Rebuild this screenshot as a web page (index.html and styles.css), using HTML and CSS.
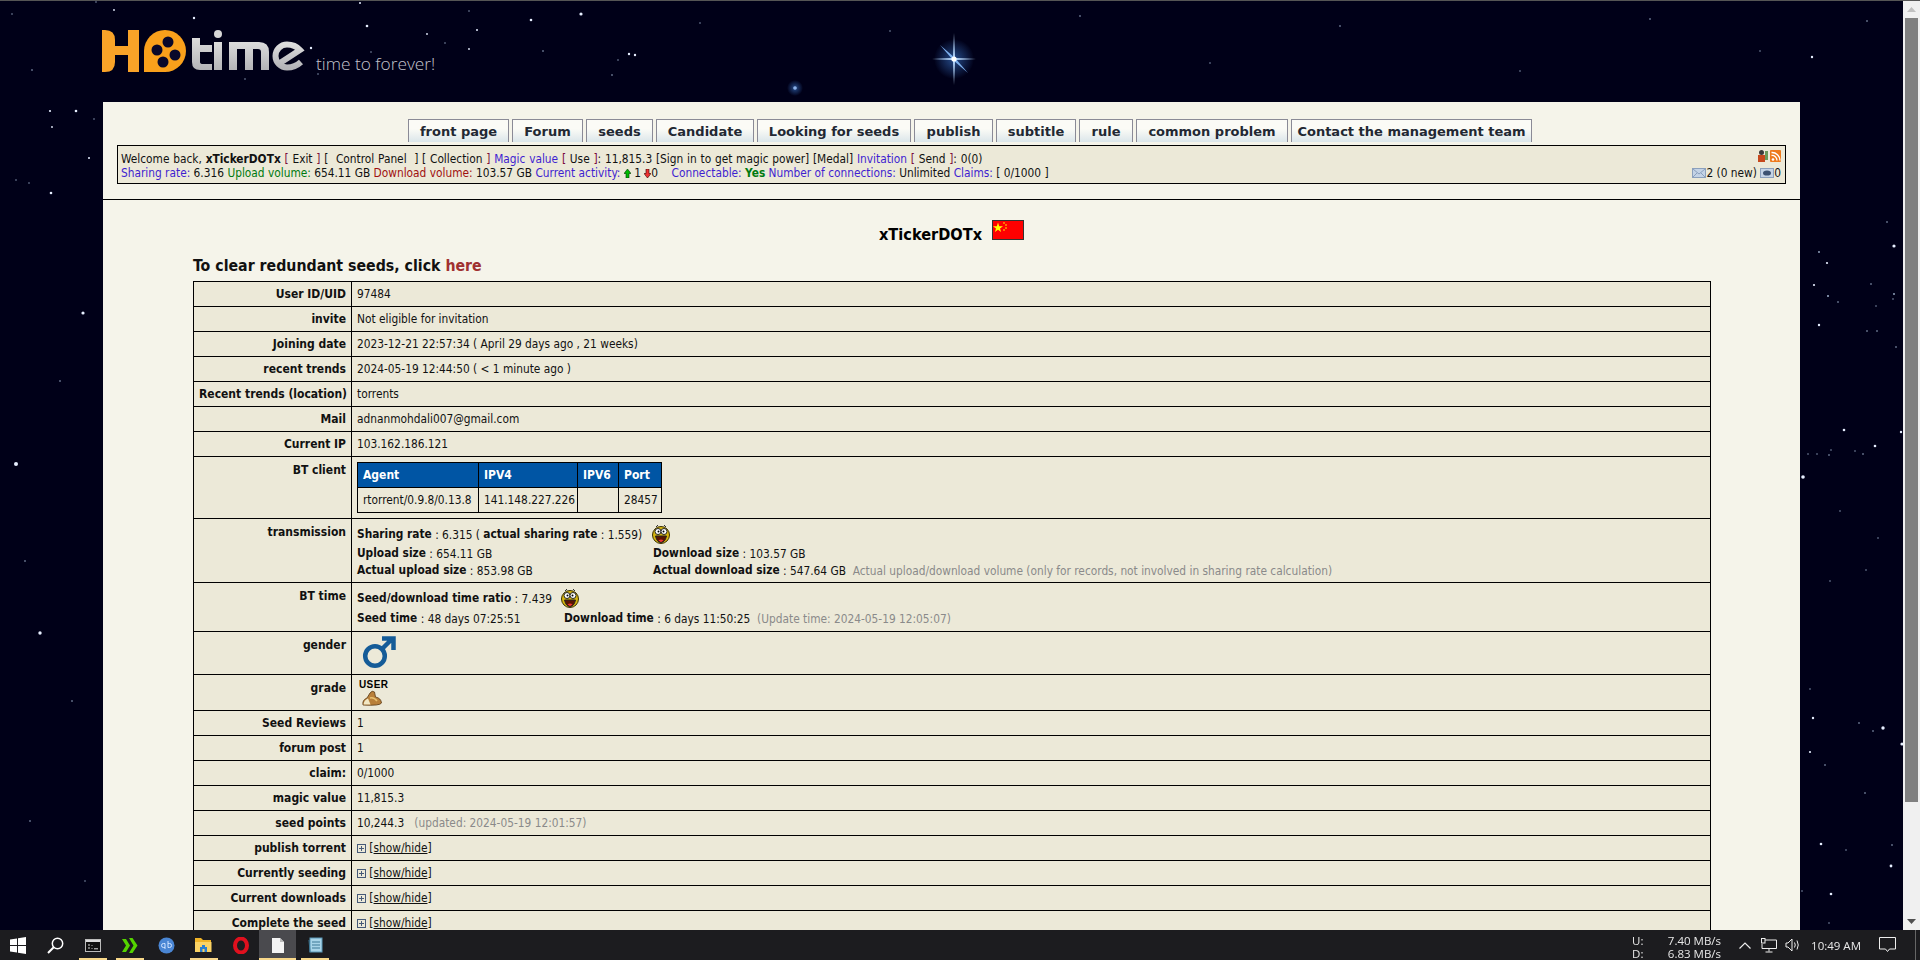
FILE: index.html
```html
<!DOCTYPE html>
<html lang="en">
<head>
<meta charset="utf-8">
<title>HDtime</title>
<link rel="stylesheet" href="styles.css">
</head>
<body>
<svg class="sky" width="1920" height="960" viewBox="0 0 1920 960" aria-hidden="true">
  <defs>
    <radialGradient id="glow"><stop offset="0" stop-color="#3f7fd8" stop-opacity=".6"/><stop offset="1" stop-color="#3f7fd8" stop-opacity="0"/></radialGradient>
  </defs>
  <g fill="#e6eeff">
    <circle cx="194" cy="17" r="1.2"/><circle cx="114" cy="9" r=".9"/><circle cx="581" cy="13" r="1.6"/><circle cx="531" cy="19" r="1.3"/><circle cx="367" cy="25" r="1.3"/><circle cx="427" cy="33" r=".9"/><circle cx="477" cy="29" r="1"/><circle cx="469" cy="48" r=".9"/><circle cx="629" cy="53" r="1.2"/><circle cx="635" cy="54" r="1.2"/><circle cx="311" cy="47" r="1.2"/><circle cx="795" cy="87" r="1.8"/><circle cx="360" cy="2" r="1"/><circle cx="1812" cy="56" r="1.2"/>
    <circle cx="50" cy="110" r="1.1"/><circle cx="76" cy="110" r="1.3"/><circle cx="52" cy="126" r=".9"/><circle cx="89" cy="157" r="1"/><circle cx="51" cy="192" r="1.3"/><circle cx="16" cy="463" r="2"/><circle cx="83" cy="312" r="1.6"/><circle cx="40" cy="632" r="1.7"/>
    <circle cx="1894" cy="245" r="1.6"/><circle cx="1827" cy="262" r="1.1"/><circle cx="1814" cy="284" r="1.1"/><circle cx="1819" cy="324" r="1.2"/><circle cx="1844" cy="429" r="1.3"/><circle cx="1901" cy="431" r="1.2"/><circle cx="1875" cy="445" r="1.3"/><circle cx="1803" cy="476" r="1.8"/><circle cx="1813" cy="717" r="1.2"/><circle cx="1883" cy="727" r="1.7"/><circle cx="1902" cy="743" r="1.6"/><circle cx="1810" cy="751" r="1.1"/><circle cx="1821" cy="843" r="1.3"/><circle cx="1891" cy="865" r="1.4"/><circle cx="1831" cy="893" r="1.3"/>
  </g>
  <g fill="#9fb2cc">
    <circle cx="12" cy="13" r=".7"/><circle cx="96" cy="1" r=".7"/><circle cx="32" cy="69" r=".8"/><circle cx="469" cy="10" r=".7"/><circle cx="543" cy="50" r=".8"/><circle cx="445" cy="42" r=".7"/><circle cx="371" cy="51" r=".7"/><circle cx="612" cy="74" r=".8"/><circle cx="618" cy="59" r=".7"/><circle cx="245" cy="78" r=".7"/><circle cx="318" cy="73" r=".7"/><circle cx="700" cy="22" r=".7"/><circle cx="890" cy="30" r=".7"/><circle cx="1080" cy="15" r=".8"/><circle cx="1210" cy="62" r=".7"/><circle cx="1340" cy="25" r=".8"/><circle cx="1520" cy="70" r=".7"/><circle cx="1650" cy="18" r=".8"/><circle cx="1760" cy="50" r=".7"/><circle cx="1867" cy="20" r=".8"/>
    <circle cx="94" cy="118" r=".7"/><circle cx="16" cy="179" r=".7"/><circle cx="29" cy="182" r=".7"/><circle cx="60" cy="380" r=".8"/><circle cx="25" cy="560" r=".8"/><circle cx="72" cy="700" r=".8"/><circle cx="30" cy="820" r=".8"/><circle cx="85" cy="880" r=".7"/>
    <circle cx="1887" cy="221" r=".8"/><circle cx="1819" cy="251" r=".9"/><circle cx="1828" cy="295" r="1"/><circle cx="1838" cy="301" r=".8"/><circle cx="1871" cy="283" r=".8"/><circle cx="1894" cy="293" r=".9"/><circle cx="1893" cy="298" r=".7"/><circle cx="1876" cy="305" r=".7"/><circle cx="1867" cy="330" r=".8"/><circle cx="1877" cy="330" r=".8"/><circle cx="1896" cy="346" r=".8"/><circle cx="1863" cy="453" r=".8"/><circle cx="1855" cy="450" r=".7"/><circle cx="1829" cy="454" r=".8"/><circle cx="1831" cy="449" r=".7"/><circle cx="1817" cy="453" r=".7"/><circle cx="1808" cy="453" r=".7"/><circle cx="1840" cy="510" r=".7"/><circle cx="1878" cy="537" r=".7"/><circle cx="1866" cy="569" r=".7"/><circle cx="1830" cy="580" r=".7"/><circle cx="1810" cy="688" r=".7"/><circle cx="1859" cy="722" r=".8"/><circle cx="1873" cy="730" r=".8"/><circle cx="1825" cy="764" r=".8"/><circle cx="1865" cy="792" r=".8"/><circle cx="1892" cy="844" r=".8"/><circle cx="1846" cy="849" r=".7"/><circle cx="1802" cy="890" r=".7"/><circle cx="1829" cy="922" r=".7"/>
  </g>
  <circle cx="954" cy="58" r="20" fill="url(#glow)"/>
  <path d="M954 32 L955 57 L976 58 L955 59 L954 84 L953 59 L932 58 L953 57Z" fill="#bcdcff"/>
  <path d="M940 44 L955 57 L968 72 L953 59Z" fill="#7fb2f0"/>
  <circle cx="954" cy="58" r="2.6" fill="#fff"/>
  <circle cx="795" cy="87" r="8" fill="url(#glow)"/>
</svg>

<div class="page">
  <header class="masthead">
    <svg class="logo" width="340" height="50" viewBox="0 0 340 50" aria-label="HDtime logo">
      <defs>
        <linearGradient id="silver" x1="0" x2="0" y1="0" y2="1"><stop offset="0" stop-color="#dcdcdc"/><stop offset="1" stop-color="#b4b4b8"/></linearGradient>
      </defs>
      <path d="M0 0H3Q13 0 13 10V16H26V0H37V42H26V25H13V32Q13 42 3 42H0Z" fill="#f9a328"/>
      <path d="M42 42V21A21 21 0 1 1 63 42Z" fill="#f9a01b"/>
      <g fill="#08082a"><circle cx="66" cy="12" r="5.500"/><circle cx="55" cy="20" r="5.500"/><circle cx="73" cy="25" r="5.500"/><circle cx="61" cy="32" r="5.500"/></g>
      <path d="M90 8H98V15H110V22H98V32Q98 34 101 34H110V40H98Q90 40 90 32Z" fill="url(#silver)"/>
      <circle cx="116" cy="4" r="4" fill="#d8d8d8"/>
      <rect x="112" y="12" width="8" height="28" fill="url(#silver)"/>
      <path d="M127 40V12H157Q167 12 167 22V40H159V22Q159 19 156 19H151V40H143V19H135V40Z" fill="url(#silver)"/>
      <path d="M178 33 198 20Q193 14.500 185 14.500A11.500 11.500 0 0 0 185 37.500Q193 37.500 199 32" fill="none" stroke="url(#silver)" stroke-width="6"/>
      <text class="tagline" x="214" y="40">time to forever!</text>
    </svg>
  </header>

  <main class="panel">
    <nav class="tabs">
      <a class="tab">front page</a><a class="tab">Forum</a><a class="tab">seeds</a><a class="tab">Candidate</a><a class="tab">Looking for seeds</a><a class="tab">publish</a><a class="tab">subtitle</a><a class="tab">rule</a><a class="tab">common problem</a><a class="tab">Contact the management team</a>
    </nav>
    <section class="info">
      <div class="info-left">
        <div class="info-first">Welcome back, <b>xTickerDOTx</b> <span class="br">[</span> Exit <span class="br">]</span> [ &nbsp;Control Panel &nbsp;] [ Collection <span class="br">]</span> <span class="blue">Magic value</span> <span class="br">[</span> Use <span class="br">]</span>: 11,815.3 [Sign in to get magic power] [Medal] <span class="blue">Invitation</span> <span class="br">[</span> Send <span class="br">]</span>: 0(0)</div>
        <div><span class="blue">Sharing rate:</span> 6.316 <span class="green">Upload volume:</span> 654.11 GB <span class="red">Download volume:</span> 103.57 GB <span class="blue">Current activity:</span> <svg class="arrow" width="7" height="9" viewBox="0 0 7 9"><path d="M3.500 0 7 4.500H5V9H2V4.500H0Z" fill="#0b0" stroke="#030" stroke-width=".6"/></svg> 1 <svg class="arrow" width="7" height="9" viewBox="0 0 7 9"><path d="M3.500 9 7 4.500H5V0H2V4.500H0Z" fill="#e33" stroke="#300" stroke-width=".6"/></svg>0 &nbsp;&nbsp; <span class="blue">Connectable:</span> <b class="yes">Yes</b> <span class="blue">Number of connections:</span> Unlimited <span class="blue">Claims:</span> [ 0/1000 ]</div>
      </div>
      <div class="info-right">
        <div class="info-icons">
          <svg width="11" height="12" viewBox="0 0 11 12"><circle cx="4.500" cy="2.500" r="2.500" fill="#3a3a3a"/><rect x="1" y="5" width="7" height="7" fill="#c6481c"/><rect x="8" y="1" width="3" height="9" fill="#6a9a5a"/></svg>
          <svg width="11" height="12" viewBox="0 0 11 12"><rect width="11" height="12" rx="1" fill="#ee7a1c"/><circle cx="3" cy="9.500" r="1.300" fill="#fff"/><path d="M1.500 5.500A5 5 0 0 1 7 10.500M1.500 2.500A8 8 0 0 1 10 10.500" fill="none" stroke="#fff" stroke-width="1.300"/></svg>
        </div>
        <div class="info-msgs">
          <svg width="14" height="10" viewBox="0 0 14 10"><rect x=".5" y=".5" width="13" height="9" fill="#c4d3e6" stroke="#8ba0bd"/><path d="M1 1 7 6l6-5M1 9l4-4M13 9 9 5" fill="none" stroke="#8ba0bd"/></svg>2 (0 new) <svg width="14" height="10" viewBox="0 0 14 10"><rect x=".5" y=".5" width="13" height="9" fill="#c4d3e6" stroke="#8ba0bd"/><ellipse cx="7" cy="5" rx="4" ry="2.600" fill="#3d5272"/></svg>0
        </div>
      </div>
    </section>
    <hr class="rule">
    <section class="profile">
      <h1 class="username">xTickerDOTx<svg class="flag" width="32" height="20" viewBox="0 0 32 20"><rect x=".5" y=".5" width="31" height="19" fill="#f00" stroke="#333"/><path d="M6 2.500 7.200 6.200 11 6.200 8 8.400 9.100 12 6 9.800 2.900 12 4 8.400 1 6.200 4.800 6.200Z" fill="#ff0"/><g fill="#ff0"><circle cx="12" cy="3" r=".8"/><circle cx="14" cy="5" r=".8"/><circle cx="14" cy="8" r=".8"/><circle cx="12" cy="10" r=".8"/></g></svg></h1>
      <h2 class="clear">To clear redundant seeds, click <a class="here">here</a></h2>
      <table class="details">
        <tr><th>User ID/UID</th><td>97484</td></tr>
        <tr><th>invite</th><td>Not eligible for invitation</td></tr>
        <tr><th>Joining date</th><td>2023-12-21 22:57:34 ( April 29 days ago , 21 weeks)</td></tr>
        <tr><th>recent trends</th><td>2024-05-19 12:44:50 ( &lt; 1 minute ago )</td></tr>
        <tr><th>Recent trends (location)</th><td>torrents</td></tr>
        <tr><th>Mail</th><td>adnanmohdali007@gmail.com</td></tr>
        <tr><th>Current IP</th><td>103.162.186.121</td></tr>
        <tr class="top r-client"><th>BT client</th><td class="client-cell">
          <table class="client">
            <tr><th>Agent</th><th>IPV4</th><th>IPV6</th><th>Port</th></tr>
            <tr><td>rtorrent/0.9.8/0.13.8</td><td>141.148.227.226</td><td></td><td>28457</td></tr>
          </table>
        </td></tr>
        <tr class="top r-trans"><th>transmission</th><td class="stats">
          <div class="stat-line"><b>Sharing rate</b> : 6.315 ( <b>actual sharing rate</b> : 1.559) <svg class="smile" width="20" height="20" viewBox="0 0 20 20"><use href="#face"/></svg></div>
          <div class="stat-grid wide">
            <span><b>Upload size</b> : 654.11 GB</span><span><b>Download size</b> : 103.57 GB</span>
            <span><b>Actual upload size</b> : 853.98 GB</span><span><b>Actual download size</b> : 547.64 GB <i class="note">&nbsp;Actual upload/download volume (only for records, not involved in sharing rate calculation)</i></span>
          </div>
        </td></tr>
        <tr class="top r-time"><th>BT time</th><td class="stats">
          <div class="stat-line"><b>Seed/download time ratio</b> : 7.439 <svg class="smile" width="20" height="20" viewBox="0 0 20 20"><use href="#face"/></svg></div>
          <div class="stat-grid narrow">
            <span><b>Seed time</b> : 48 days 07:25:51</span><span><b>Download time</b> : 6 days 11:50:25 <i class="note">&nbsp;(Update time: 2024-05-19 12:05:07)</i></span>
          </div>
        </td></tr>
        <tr class="top r-gender"><th>gender</th><td class="gender-cell">
          <svg width="34" height="34" viewBox="0 0 34 34"><circle cx="13" cy="21" r="9.800" fill="none" stroke="#155c98" stroke-width="4.500"/><path d="M20 14 30 4M20 3.500H31.500V15" fill="none" stroke="#155c98" stroke-width="4.500"/></svg>
        </td></tr>
        <tr class="top r-grade"><th>grade</th><td class="grade-cell">
          <span class="user-badge">USER</span>
          <svg class="bag" width="20" height="16" viewBox="0 0 20 16"><path d="M1 15Q0 10 5 8L8 3Q10 0 12.500 2L13.500 7Q19 8 19.500 13Q18 16 1 15Z" fill="#b9803a" stroke="#5a3a14" stroke-width=".8"/><path d="M1.500 14.500Q2 10 6 8.500L8.500 14.500Z" fill="#f2e8c4"/><path d="M8 8Q12 7 15 11" fill="none" stroke="#e8c070" stroke-width="1.500"/></svg>
        </td></tr>
        <tr><th>Seed Reviews</th><td>1</td></tr>
        <tr><th>forum post</th><td>1</td></tr>
        <tr><th>claim:</th><td>0/1000</td></tr>
        <tr><th>magic value</th><td>11,815.3</td></tr>
        <tr><th>seed points</th><td>10,244.3 <i class="note">&nbsp;&nbsp;(updated: 2024-05-19 12:01:57)</i></td></tr>
        <tr><th>publish torrent</th><td><span class="plus"></span> [<a class="toggle">show/hide</a>]</td></tr>
        <tr><th>Currently seeding</th><td><span class="plus"></span> [<a class="toggle">show/hide</a>]</td></tr>
        <tr><th>Current downloads</th><td><span class="plus"></span> [<a class="toggle">show/hide</a>]</td></tr>
        <tr><th>Complete the seed</th><td><span class="plus"></span> [<a class="toggle">show/hide</a>]</td></tr>
      </table>
    </section>
  </main>
</div>

<svg class="defs" width="0" height="0" aria-hidden="true">
  <symbol id="face" viewBox="0 0 20 20">
    <path d="M5 3 7 1M15 3 13 1" stroke="#333" fill="none"/>
    <ellipse cx="10" cy="11" rx="8.500" ry="8.500" fill="#d8b60e" stroke="#3a3000"/>
    <circle cx="7" cy="7.500" r="3" fill="#fff" stroke="#222"/><circle cx="13" cy="7.500" r="3" fill="#fff" stroke="#222"/>
    <circle cx="7.500" cy="7.500" r="1" fill="#000"/><circle cx="12.500" cy="7.500" r="1" fill="#000"/>
    <path d="M4.500 12H15.500Q14 18.500 10 18.500T4.500 12Z" fill="#5a1400" stroke="#222"/>
    <path d="M7.500 16.200Q10 14.800 12.500 16.200L10 18.200Z" fill="#e33"/>
  </symbol>
</svg>

<div class="scrollbar" aria-hidden="true">
  <span class="sb-btn"><svg width="9" height="5" viewBox="0 0 9 5"><path d="M4.500 0 9 5H0Z" fill="#c0c0c0"/></svg></span>
  <span class="sb-thumb"></span>
  <span class="sb-fill"></span>
  <span class="sb-btn"><svg width="9" height="5" viewBox="0 0 9 5"><path d="M4.500 5 9 0H0Z" fill="#505050"/></svg></span>
</div>

<footer class="taskbar">
  <div class="tb-apps">
    <span class="tb-app"><svg width="17" height="17" viewBox="0 0 17 17"><path d="M0 2.400 7 1.400V8H0ZM8 1.200 16 0V8H8ZM0 9H7V15.600L0 14.600ZM8 9H16V17L8 15.800Z" fill="#fff"/></svg></span>
    <span class="tb-app"><svg width="17" height="17" viewBox="0 0 17 17"><circle cx="10.500" cy="6.500" r="5.200" fill="none" stroke="#fff" stroke-width="1.500"/><path d="M6.700 10.300 1 16" stroke="#fff" stroke-width="2"/></svg></span>
    <span class="tb-app run"><svg width="16" height="13" viewBox="0 0 16 13"><rect x=".5" y=".5" width="15" height="12" fill="#111" stroke="#bbb"/><rect x="1" y="1" width="14" height="2" fill="#ddd"/><path d="M3 6H5M3 9H5M7 6V6.800M7 9V9.800M9 9.800H13" stroke="#ddd"/></svg></span>
    <span class="tb-app run"><svg width="16" height="15" viewBox="0 0 16 15"><path d="M0 1H4L8 7.500 4 14H0L4 7.500ZM7 0H10.500L15.500 7.500 10.500 15H7L11.500 7.500Z" fill="#55d400"/></svg></span>
    <span class="tb-app"><svg width="17" height="17" viewBox="0 0 17 17"><circle cx="8.500" cy="8.500" r="8" fill="#4a86d4"/><path d="M7 6.500V12M7 6.500H5.500A2 2 0 0 0 5.500 10.500H7M10 4V10.500H11.500A2 2 0 0 0 11.500 6.500H10" fill="none" stroke="#cfe2ff"/></svg></span>
    <span class="tb-app run"><svg width="17" height="15" viewBox="0 0 17 15"><path d="M0 0H6L8 2H16V14H0Z" fill="#f0b428"/><rect y="4" width="16.500" height="10" fill="#fbd364"/><path d="M5 14V9H7V7H10V9H12V14H9.500V11H7.500V14Z" fill="#2a7fd0"/></svg></span>
    <span class="tb-app"><svg width="16" height="17" viewBox="0 0 16 17"><ellipse cx="8" cy="8.500" rx="6" ry="7" fill="none" stroke="#e0101e" stroke-width="4"/></svg></span>
    <span class="tb-app active"><svg width="12" height="15" viewBox="0 0 12 15"><path d="M0 0H8L12 4V15H0Z" fill="#f4f4f4"/><path d="M8 0V4H12" fill="#bbb"/></svg></span>
    <span class="tb-app run"><svg width="16" height="16" viewBox="0 0 16 16"><rect x="3" y="1" width="12" height="14" fill="#a8d4e8" stroke="#5a98b8"/><path d="M2 3 3 15M5 5H13M5 8H13M5 11H13" stroke="#3c7896" fill="none"/></svg></span>
  </div>
  <div class="tb-tray">
    <div class="tb-net"><span>U:</span><span>7.40 MB/s</span><span>D:</span><span>6.83 MB/s</span></div>
    <svg class="tb-chev" width="12" height="7" viewBox="0 0 12 7"><path d="M.5 6.500 6 1 11.500 6.500" fill="none" stroke="#eee" stroke-width="1.200"/></svg>
    <svg class="tb-mon" width="16" height="15" viewBox="0 0 16 15"><path d="M4 2H15.500V10.500H1V6M8 11V13.500M4.500 14H11.500" fill="none" stroke="#eee"/><rect x=".5" y=".5" width="3.500" height="4.500" fill="#1c1c1f" stroke="#eee"/></svg>
    <svg class="tb-vol" width="16" height="14" viewBox="0 0 16 14"><path d="M1 5H3L7 1V13L3 9H1ZM9.500 4.500Q11 7 9.500 9.500M12 2.500Q14.500 7 12 11.500" fill="none" stroke="#eee"/></svg>
    <span class="tb-clock">10:49 AM</span>
    <svg class="tb-note" width="17" height="16" viewBox="0 0 17 16"><path d="M.5 .5H16.500V12H10.500L8.500 14.500 6.500 12H.5Z" fill="none" stroke="#eee"/></svg>
    <span class="tb-peek"></span>
  </div>
</footer>
</body>
</html>
```

FILE: styles.css
```css
* { box-sizing: border-box; }
html, body { margin: 0; height: 960px; overflow: hidden; }
body {
  position: relative;
  background: #000018;
  font: 11.8px/14px "DejaVu Sans Condensed", "DejaVu Sans", sans-serif;
  color: #111;
  border-top: 1px solid #555;
}
a { color: inherit; }
.sky { position: absolute; left: 0; top: 0; }
.defs { position: absolute; }
.page { position: relative; width: 1697px; margin-left: 103px; }

.masthead { height: 101px; position: relative; }
.logo { position: absolute; left: -1px; top: 29px; overflow: visible; }
.tagline { font: 300 17.3px "Open Sans", sans-serif; fill: #c4c4cc; }

.panel { background: #f5f4ea; padding-top: 17px; height: 900px; }
.tabs { display: flex; gap: 3px; height: 24px; margin-left: 305px; }
.tab {
  height: 23px;
  border: 1px solid #8a8a96;
  border-bottom: 0;
  background: linear-gradient(#fbfbf6 40%, #dbe6ea);
  font: 700 13px/24px "DejaVu Sans", sans-serif;
  color: #222833;
  text-align: center;
  white-space: nowrap;
}
.tab:nth-child(1) { width: 101px; }
.tab:nth-child(2) { width: 71px; }
.tab:nth-child(3) { width: 67px; }
.tab:nth-child(4) { width: 98px; }
.tab:nth-child(5) { width: 154px; }
.tab:nth-child(6) { width: 79px; }
.tab:nth-child(7) { width: 80px; }
.tab:nth-child(8) { width: 54px; }
.tab:nth-child(9) { width: 152px; }
.tab:nth-child(10) { width: 241px; }
.info {
  display: flex;
  justify-content: space-between;
  margin: 2px 14px 0;
  height: 39px;
  border: 1px solid #000;
  background: #ece9d8;
  padding: 0 4px 0 3px;
}
.info-left { padding-top: 6px; }
.info-first { word-spacing: .4px; }
.info-right { text-align: right; padding-top: 4px; }
.info-icons { display: flex; justify-content: flex-end; gap: 2px; height: 16px; }
.info-msgs svg { vertical-align: -1px; }
.br { color: #7a0a3c; }
.blue { color: #3f1fd0; }
.green { color: #007a10; }
.red { color: #a01010; }
.yes { color: #007a10; }
.arrow { vertical-align: -1px; }

.rule { border: 0; border-top: 1px solid #000; margin: 15px 0 0; }
.profile { padding: 0 90px; }
.username { margin: 20px 0 0; height: 20px; text-align: center; font: 700 16.2px/20px "DejaVu Sans Condensed", "DejaVu Sans", sans-serif; color: #000; }
.flag { margin-left: 10px; }
.clear { margin: 16px 0 0; height: 25px; font: 700 15.75px/20px "DejaVu Sans Condensed", "DejaVu Sans", sans-serif; color: #111; }
.here { color: #a03030; }

.details { border-collapse: collapse; width: 1518px; background: #ece9d8; table-layout: fixed; }
.details > tbody > tr > th, .details > tbody > tr > td { border: 1px solid #000; height: 25px; padding: 0 5px; }
.details > tbody > tr > th { width: 158px; text-align: right; font: 700 12px/14px "DejaVu Sans Condensed", "DejaVu Sans", sans-serif; color: #111; white-space: nowrap; }
.details > tbody > tr.top > th { vertical-align: top; padding-top: 6px; }
.details > tbody > tr.top > td { vertical-align: top; }
.details > tbody > tr.r-client > th, .details > tbody > tr.r-client > td { height: 62px; }
.details > tbody > tr.r-trans > th, .details > tbody > tr.r-trans > td { height: 64px; }
.details > tbody > tr.r-time > th, .details > tbody > tr.r-time > td { height: 49px; }
.details > tbody > tr.r-gender > th, .details > tbody > tr.r-gender > td { height: 43px; }
.details > tbody > tr.r-grade > th, .details > tbody > tr.r-grade > td { height: 36px; }
.details > tbody > tr > td.client-cell { padding-top: 5px; }
.details > tbody > tr > td.stats { padding-top: 5px; }

.client { border-collapse: collapse; table-layout: fixed; width: 304px; }
.client th, .client td { border: 1px solid #000; height: 25px; padding: 0 5px; text-align: left; white-space: nowrap; }
.client th { background: #0055a4; color: #fff; font-weight: 700; font-size: 12px; }
.client th:nth-child(1) { width: 121px; }
.client th:nth-child(2) { width: 99px; }
.client th:nth-child(3) { width: 41px; }
.client th:nth-child(4) { width: 43px; }

.stat-line { height: 20px; line-height: 20px; white-space: nowrap; }
.stat-line b, .stat-grid b { font-size: 11.8px; vertical-align: 1px; }
.stat-grid { display: grid; line-height: 16px; white-space: nowrap; margin-top: 2px; }
.stat-grid.wide { grid-template-columns: 296px 1fr; margin-top: 1px; }
.stat-grid.narrow { grid-template-columns: 207px 1fr; }
.note { font-style: normal; color: #8a8a8a; }
.smile { vertical-align: -5px; margin-left: 5px; }
.gender-cell svg { display: block; margin: 3px 0 0 5px; }
.user-badge { display: block; font: 700 10px/10px "Liberation Sans", sans-serif; letter-spacing: .4px; color: #000; margin: 5px 0 0 2px; }
.bag { display: block; margin: 0 0 0 5px; }
.plus { display: inline-block; width: 9px; height: 9px; vertical-align: -1px; border: 1px solid #465a78; background: linear-gradient(#465a78, #465a78) center/5px 1px no-repeat, linear-gradient(#465a78, #465a78) center/1px 5px no-repeat; }
.toggle { text-decoration: underline; }

.scrollbar { position: fixed; right: 0; top: 1px; width: 17px; height: 929px; background: #f0f0f0; display: flex; flex-direction: column; align-items: center; }
.sb-btn { flex: none; height: 17px; display: flex; align-items: center; justify-content: center; }
.sb-thumb { flex: none; width: 13px; height: 784px; background: #808080; }
.sb-fill { flex: 1; }

.taskbar { position: fixed; left: 0; right: 0; bottom: 0; height: 30px; background: #1c1c1f; display: flex; justify-content: space-between; color: #e8e8e8; font: 11.5px/15px "Open Sans", sans-serif; }
.tb-apps { display: flex; }
.tb-app { position: relative; width: 37px; height: 30px; display: flex; align-items: center; justify-content: center; }
.tb-app.run::after, .tb-app.active::after { content: ""; position: absolute; bottom: 0; left: 5px; right: 4px; height: 2px; background: #f8d88a; }
.tb-app.active { background: #4a4a4e; }
.tb-app.active::after { left: 0; right: 0; }
.tb-tray { display: flex; align-items: center; }
.tb-net { display: grid; grid-template-columns: 24px 65px; margin-right: 18px; line-height: 13px; padding-top: 3px; white-space: nowrap; }
.tb-net span:nth-child(even) { text-align: right; }
.tb-mon { margin-left: 10px; }
.tb-vol { margin-left: 8px; }
.tb-clock { margin-left: 10px; }
.tb-note { margin-left: 18px; margin-right: 19px; }
.tb-peek { width: 5px; height: 30px; border-left: 1px solid #666; }
```
